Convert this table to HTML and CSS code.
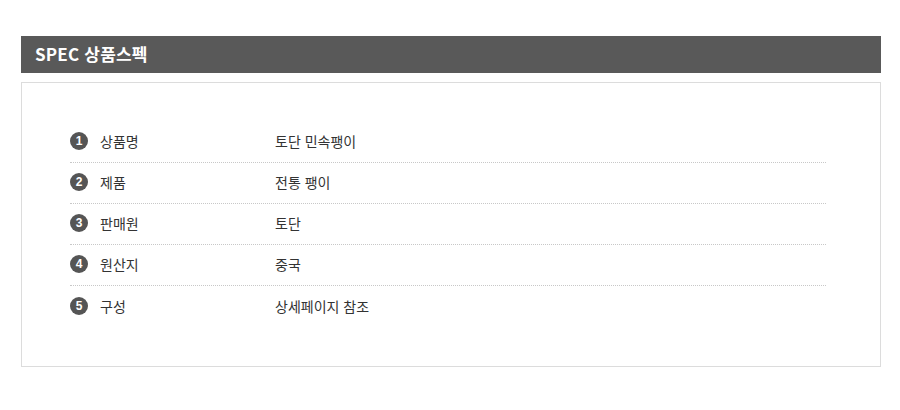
FILE: index.html
```html
<!DOCTYPE html>
<html lang="ko">
<head>
<meta charset="utf-8">
<link rel="stylesheet" href="styles.css">
</head>
<body>
<div class="wrap">
  <h2 class="title">SPEC 상품스펙</h2>
  <div class="box">
    <ul class="spec">
      <li class="row"><span class="num">1</span><span class="label">상품명</span><span class="value">토단 민속팽이</span></li>
      <li class="row"><span class="num">2</span><span class="label">제품</span><span class="value">전통 팽이</span></li>
      <li class="row"><span class="num">3</span><span class="label">판매원</span><span class="value">토단</span></li>
      <li class="row"><span class="num">4</span><span class="label">원산지</span><span class="value">중국</span></li>
      <li class="row"><span class="num">5</span><span class="label">구성</span><span class="value">상세페이지 참조</span></li>
    </ul>
  </div>
</div>
</body>
</html>
```
FILE: styles.css
```css
* { box-sizing: border-box; }
html, body { margin: 0; padding: 0; background: #fff; }
body { font-family: "Noto Sans CJK KR", "Noto Sans", sans-serif; color: #333; }
.wrap { padding: 36px 19px 0 21px; width: 900px; }
.title {
  margin: 0;
  height: 37px;
  line-height: 36px;
  background: #595959;
  color: #fff;
  font-size: 17px;
  font-weight: bold;
  padding-left: 14px;
  letter-spacing: 0.2px;
}
.box {
  margin-top: 9px;
  border: 1px solid #dcdcdc;
  height: 285px;
  padding: 39px 0 0 48px;
}
.spec { list-style: none; margin: 0; padding: 0; width: 756px; }
.row {
  display: flex;
  align-items: center;
  height: 41px;
  border-bottom: 1px dotted #c8c8c8;
  font-size: 14px;
  padding-bottom: 2px;
}
.row:last-child { border-bottom: none; }
.num {
  width: 18px; height: 18px;
  border-radius: 50%;
  background: #555;
  color: #fff;
  font-size: 12px;
  font-weight: bold;
  display: flex; align-items: center; justify-content: center;
  font-family: "Liberation Sans", Arial, sans-serif;
}
.label { margin-left: 12px; width: 175px; }
```
